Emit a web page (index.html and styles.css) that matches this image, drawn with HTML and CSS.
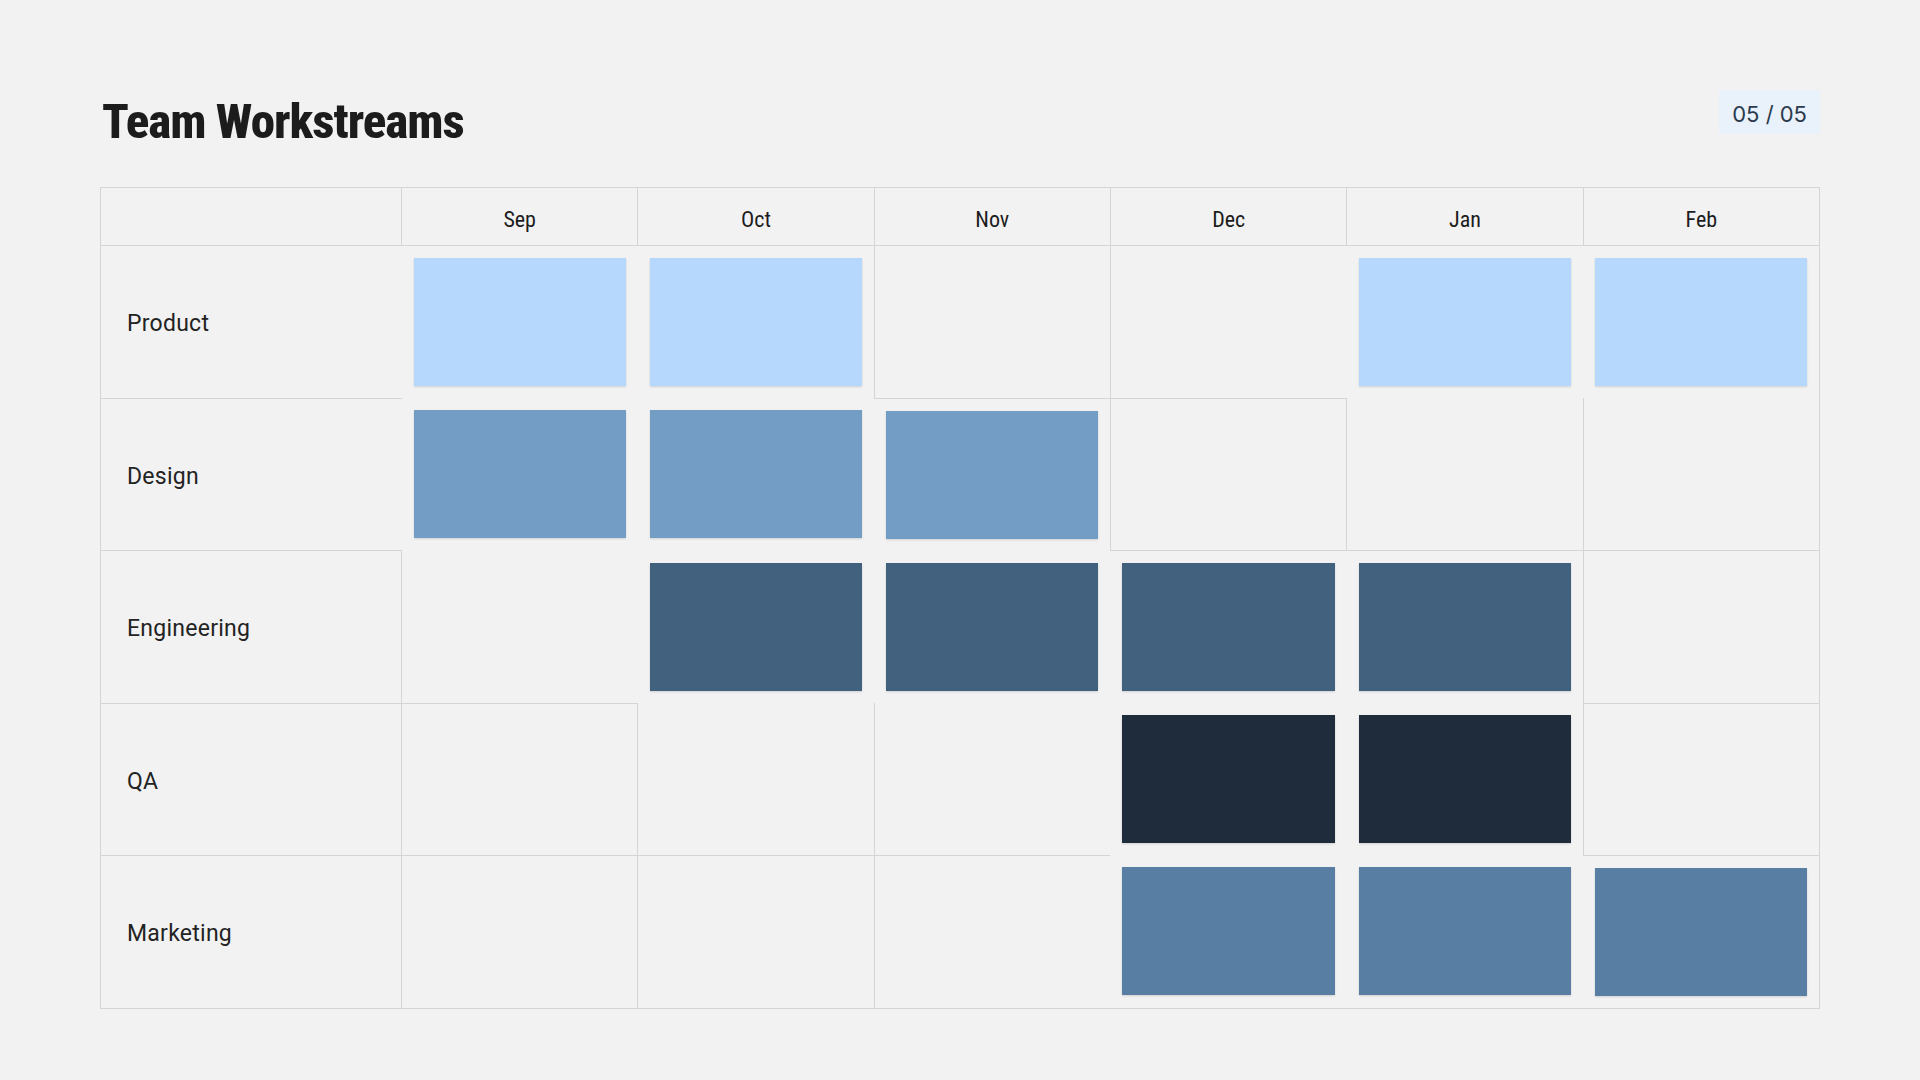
FILE: index.html
```html
<!DOCTYPE html>
<html lang="en">
<head>
<meta charset="utf-8">
<title>Team Workstreams</title>
<link rel="stylesheet" href="styles.css">
</head>
<body>
<main class="page">
  <header class="top">
    <h1 class="title">Team Workstreams</h1>
    <div class="badge">05 / 05</div>
  </header>
  <table class="grid">
    <colgroup>
      <col class="col-label">
      <col><col><col><col><col><col>
    </colgroup>
    <thead>
      <tr>
        <th class="corner"></th>
        <th class="month">Sep</th>
        <th class="month">Oct</th>
        <th class="month">Nov</th>
        <th class="month">Dec</th>
        <th class="month">Jan</th>
        <th class="month">Feb</th>
      </tr>
    </thead>
    <tbody>
      <tr>
        <th class="label">Product</th>
        <td class="fill"><div class="block product"></div></td>
        <td class="fill"><div class="block product"></div></td>
        <td class="empty"></td>
        <td class="empty"></td>
        <td class="fill"><div class="block product"></div></td>
        <td class="fill"><div class="block product"></div></td>
      </tr>
      <tr>
        <th class="label">Design</th>
        <td class="fill"><div class="block design"></div></td>
        <td class="fill"><div class="block design"></div></td>
        <td class="fill"><div class="block design"></div></td>
        <td class="empty"></td>
        <td class="empty"></td>
        <td class="empty"></td>
      </tr>
      <tr>
        <th class="label">Engineering</th>
        <td class="empty"></td>
        <td class="fill"><div class="block engineering"></div></td>
        <td class="fill"><div class="block engineering"></div></td>
        <td class="fill"><div class="block engineering"></div></td>
        <td class="fill"><div class="block engineering"></div></td>
        <td class="empty"></td>
      </tr>
      <tr>
        <th class="label">QA</th>
        <td class="empty"></td>
        <td class="empty"></td>
        <td class="empty"></td>
        <td class="fill"><div class="block qa"></div></td>
        <td class="fill"><div class="block qa"></div></td>
        <td class="empty"></td>
      </tr>
      <tr>
        <th class="label">Marketing</th>
        <td class="empty"></td>
        <td class="empty"></td>
        <td class="empty"></td>
        <td class="fill"><div class="block marketing"></div></td>
        <td class="fill"><div class="block marketing"></div></td>
        <td class="fill"><div class="block marketing"></div></td>
      </tr>
    </tbody>
  </table>
</main>
</body>
</html>
```

FILE: styles.css
```css
* {
  box-sizing: border-box;
}

html, body {
  margin: 0;
  padding: 0;
  background: #f2f2f2;
}

body {
  width: 1920px;
  height: 1080px;
  overflow: hidden;
  font-family: Roboto, "Liberation Sans", sans-serif;
  color: #1f1f1f;
}

.page {
  padding: 88px 100px 0;
}

.top {
  display: flex;
  justify-content: space-between;
  align-items: flex-start;
  height: 99px;
}

.title {
  margin: 4px 0 0 2px;
  font-family: Roboto, "Liberation Sans", sans-serif;
  font-stretch: 75%;
  font-weight: 800;
  font-size: 49px;
  line-height: 60px;
  letter-spacing: -1px;
  color: #1c1c1c;
}

.badge {
  height: 44px;
  margin-top: 2px;
  padding: 4px 13px 0;
  line-height: 40px;
  font-family: Inter, "Noto Sans", sans-serif;
  font-size: 22px;
  color: #2a3a4c;
  background: #e9f1fa;
}

.grid {
  width: 1720px;
  table-layout: fixed;
  border-collapse: collapse;
  border: 1px solid #d5d5d5;
}

.col-label {
  width: 301px;
}

.corner {
  height: 58px;
  border-bottom: 1px solid #d5d5d5;
}

.month {
  height: 58px;
  padding: 6px 0 0;
  border-left: 1px solid #d5d5d5;
  border-bottom: 1px solid #d5d5d5;
  font-family: Roboto, sans-serif;
  font-stretch: 75%;
  font-weight: 400;
  font-size: 22px;
  color: #1c1c1c;
  text-align: center;
  vertical-align: middle;
}

.label {
  padding: 4px 0 0 26px;
  border-bottom: 1px solid #d5d5d5;
  font-family: Roboto, "Liberation Sans", sans-serif;
  font-weight: 400;
  font-size: 23px;
  letter-spacing: 0.25px;
  color: #232323;
  text-align: left;
  vertical-align: middle;
}

.empty {
  padding: 0;
  border-left: 1px solid #d5d5d5;
  border-bottom: 1px solid #d5d5d5;
}

.fill {
  padding: 12px;
  border: none;
}

.block {
  height: 128px;
  box-shadow: 0 1px 2px rgba(0, 0, 0, 0.14);
}

.product { background: #b6d8fc; }
.design { background: #739dc4; }
.engineering { background: #41617f; }
.qa { background: #1e2c3c; }
.marketing { background: #587ea3; }
```
